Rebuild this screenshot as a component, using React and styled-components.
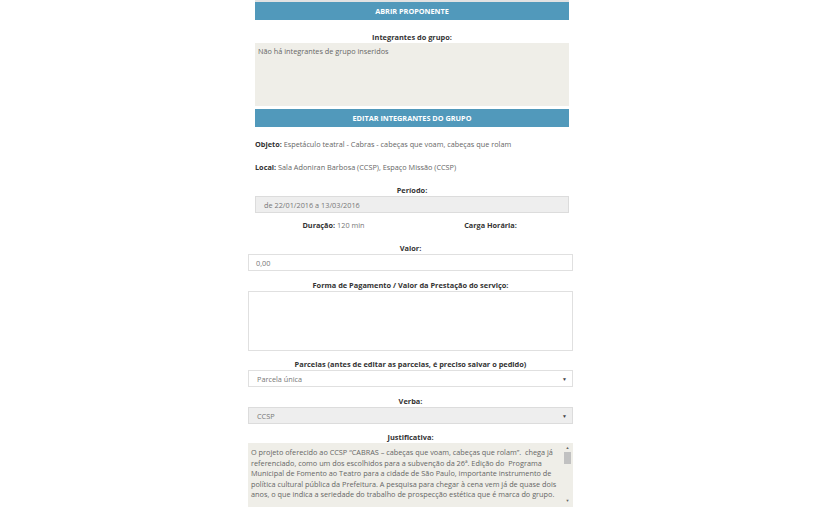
import React from 'react';
import styled, { createGlobalStyle } from 'styled-components';

const Global = createGlobalStyle`
  body {
    margin: 0;
    background: #fff;
    font-family: "Open Sans", "Noto Sans", sans-serif;
    color: #555;
  }
`;

const Page = styled.div`
  display: flex;
  justify-content: center;
  padding-right: 4px;
`;
const Column = styled.div`
  width: 325px;
  display: flex;
  flex-direction: column;
`;
const Inner = styled.div`
  padding: 0 4px 0 7px;
  display: flex;
  flex-direction: column;
`;
const TopEdge = styled.div`
  height: 2px;
  background: #e2e2e2;
`;
const BlueButton = styled.button`
  display: block;
  width: 100%;
  height: 18px;
  border: none;
  background: #5199bb;
  color: #fff;
  font-family: inherit;
  font-size: 7.3px;
  font-weight: 700;
  text-transform: uppercase;
  padding: 0;
`;
const Label = styled.div`
  text-align: center;
  font-size: 7.4px;
  font-weight: 700;
  color: #333;
  line-height: 11px;
  margin-top: ${p => p.$top || 0}px;
`;
const GroupBox = styled.div`
  height: 63px;
  background: #efeee8;
  font-size: 7.3px;
  line-height: 11px;
  color: #666;
  padding: 3px 3px;
  box-sizing: border-box;
  margin-bottom: 3px;
`;
const Line = styled.div`
  font-size: 7.3px;
  color: #666;
  line-height: 11px;
  margin-top: 12px;
  b {
    color: #333;
  }
`;
const Field = styled.div`
  height: 17px;
  box-sizing: border-box;
  border: 1px solid ${p => (p.$disabled ? '#dcdcdc' : '#e0e0e0')};
  background: ${p => (p.$disabled ? '#eeeeee' : '#fff')};
  font-size: 7.3px;
  color: #777;
  display: flex;
  align-items: center;
  justify-content: space-between;
  padding: 0 5px 0 ${p => p.$pad || 7}px;
`;
const Arrow = styled.span`
  font-size: 5px;
  color: #444;
`;
const Pair = styled.div`
  display: grid;
  grid-template-columns: 1fr 1fr;
  margin-top: 7px;
  font-size: 7.3px;
  color: #777;
  text-align: center;
  line-height: 11px;
  b {
    color: #333;
  }
`;
const Area = styled.div`
  height: 60px;
  box-sizing: border-box;
  border: 1px solid #e0e0e0;
  background: #fff;
`;
const Justify = styled.div`
  height: 64px;
  background: #efeee8;
  display: flex;
  overflow: hidden;
`;
const JustifyText = styled.div`
  flex: 1;
  font-size: 7.3px;
  line-height: 10.6px;
  color: #666;
  padding: 4px 0 0 3px;
  white-space: pre;
`;
const Scroll = styled.div`
  width: 9px;
  display: flex;
  flex-direction: column;
  align-items: center;
  font-size: 4px;
  line-height: 5px;
  color: #666;
  padding: 2px 0 4px;
  margin-right: 1px;
`;
const Thumb = styled.div`
  width: 7px;
  height: 12px;
  background: #c1c1c1;
  margin-top: 2px;
  flex: none;
`;
const Spacer = styled.div`
  flex: 1;
`;

const lines = [
  'O projeto oferecido ao CCSP “CABRAS – cabeças que voam, cabeças que rolam”.  chega já',
  'referenciado, como um dos escolhidos para a subvenção da 26ª. Edição do  Programa',
  'Municipal de Fomento ao Teatro para a cidade de São Paulo, importante instrumento de',
  'política cultural pública da Prefeitura. A pesquisa para chegar à cena vem já de quase dois',
  'anos, o que indica a seriedade do trabalho de prospecção estética que é marca do grupo.',
];

export default function App() {
  return (
    <Page>
      <Global />
      <Column>
        <Inner>
          <TopEdge />
          <BlueButton>Abrir proponente</BlueButton>
          <Label $top={12}>Integrantes do grupo:</Label>
          <GroupBox>Não há integrantes de grupo inseridos</GroupBox>
          <BlueButton>Editar integrantes do grupo</BlueButton>
          <Line>
            <b>Objeto:</b> Espetáculo teatral - Cabras - cabeças que voam, cabeças que rolam
          </Line>
          <Line>
            <b>Local:</b> Sala Adoniran Barbosa (CCSP), Espaço Missão (CCSP)
          </Line>
          <Label $top={12}>Período:</Label>
          <Field $disabled $pad={8}>de 22/01/2016 a 13/03/2016</Field>
          <Pair>
            <div>
              <b>Duração:</b> 120 min
            </div>
            <div>
              <b>Carga Horária:</b>
            </div>
          </Pair>
        </Inner>
        <Label $top={12}>Valor:</Label>
        <Field>0,00</Field>
        <Label $top={9}>Forma de Pagamento / Valor da Prestação do serviço:</Label>
        <Area />
        <Label $top={8}>Parcelas (antes de editar as parcelas, é preciso salvar o pedido)</Label>
        <Field $pad={8}>
          Parcela única<Arrow>▼</Arrow>
        </Field>
        <Label $top={9}>Verba:</Label>
        <Field $disabled $pad={8}>
          CCSP<Arrow>▼</Arrow>
        </Field>
        <Label $top={8}>Justificativa:</Label>
        <Justify>
          <JustifyText>{lines.join('\n')}</JustifyText>
          <Scroll>
            ▲<Thumb />
            <Spacer />▼
          </Scroll>
        </Justify>
      </Column>
    </Page>
  );
}
